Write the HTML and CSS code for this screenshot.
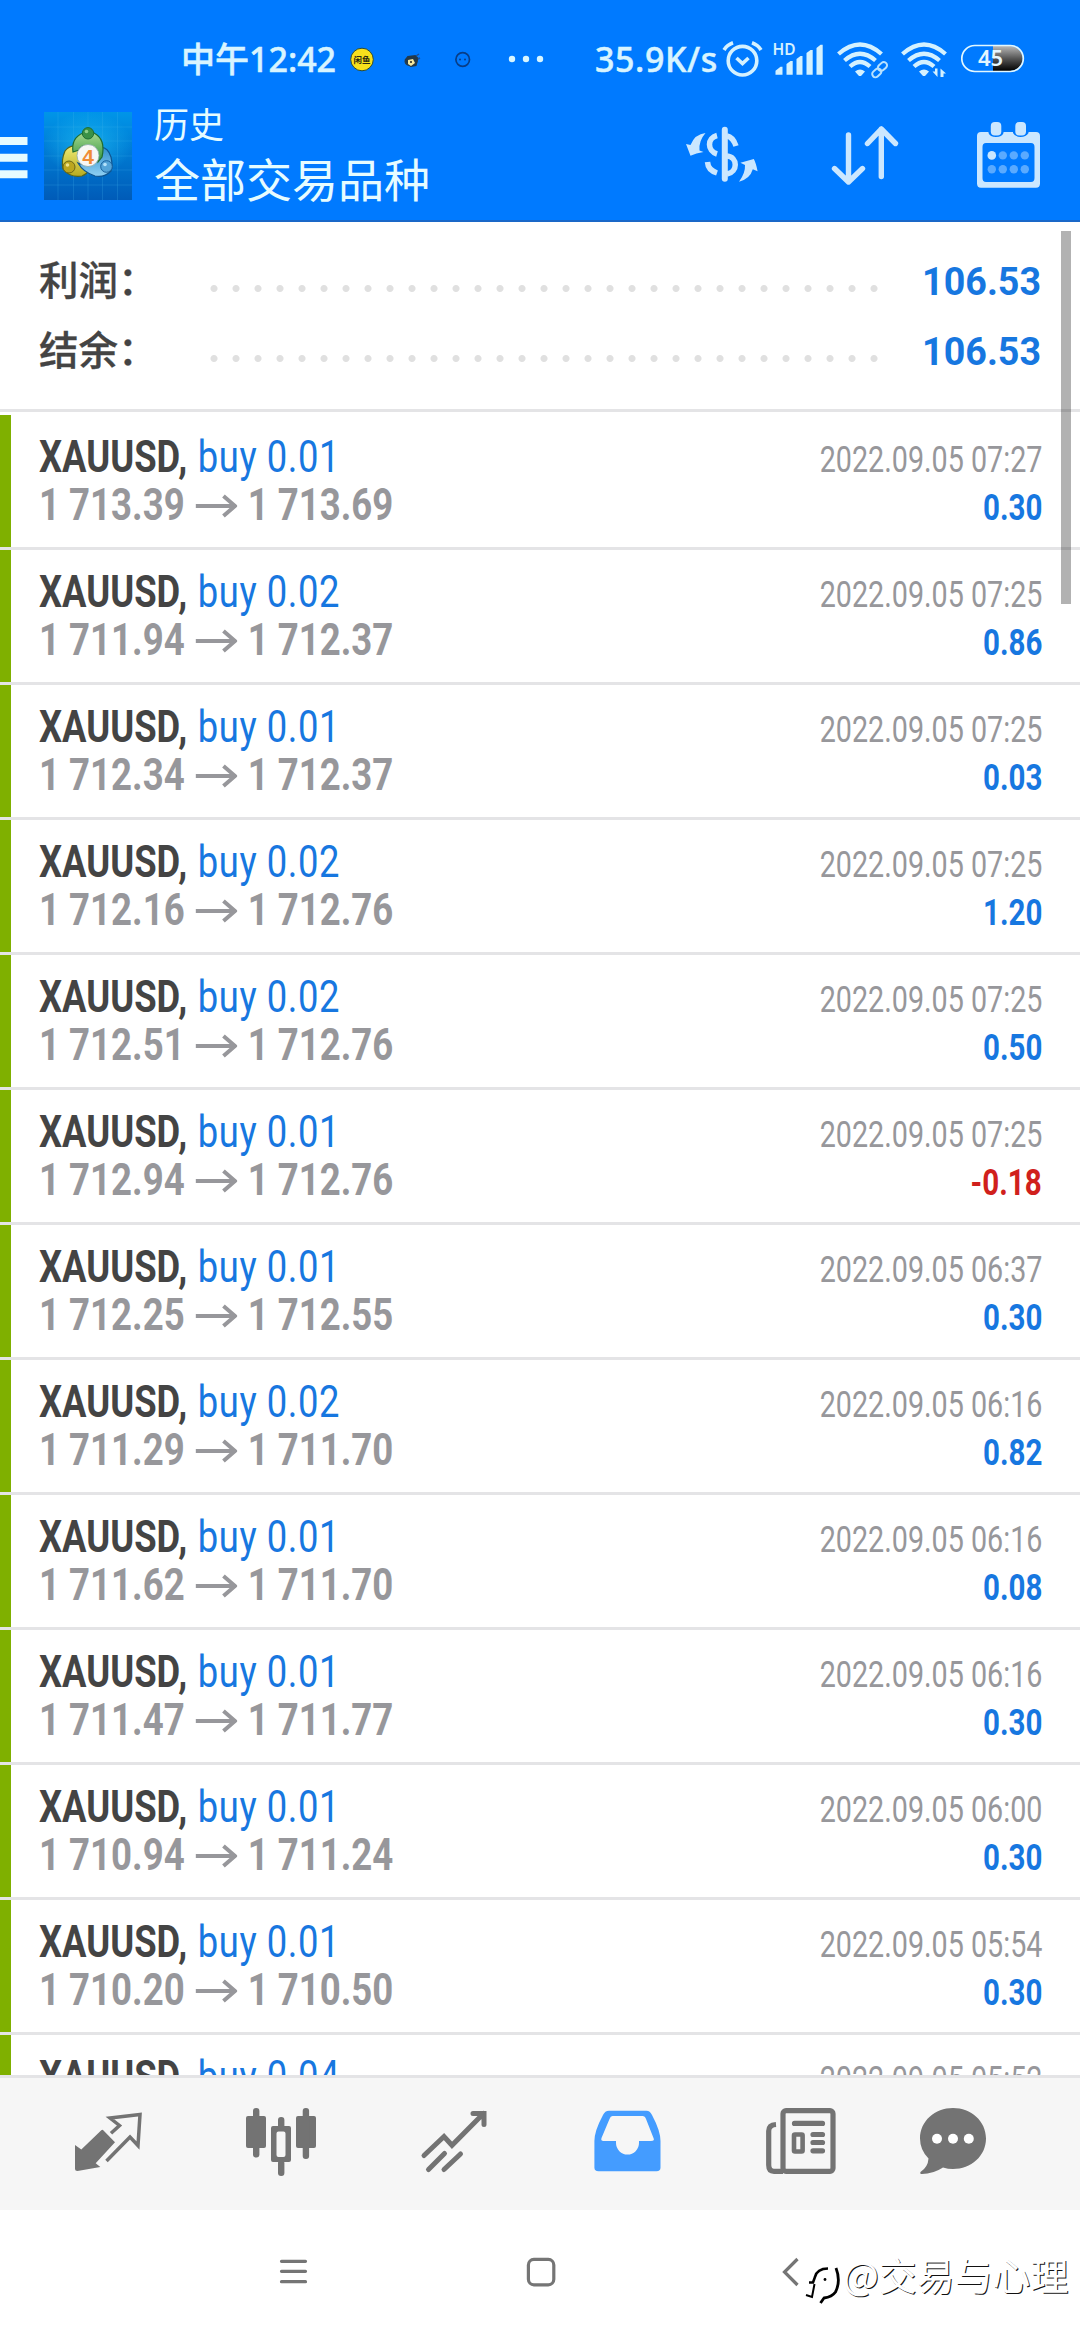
FILE: index.html
```html
<!DOCTYPE html>
<html lang="zh-CN">
<head>
<meta charset="utf-8">
<title>历史</title>
<link rel="stylesheet" href="styles.css">
</head>
<body>
<svg class="defs" width="0" height="0">
  <symbol id="arrow" viewBox="0 0 42 24" preserveAspectRatio="none"><path d="M0 12H39M28 2L39.500 12L28 22" fill="none" stroke="#97979b" stroke-width="4"/></symbol>
</svg>
<div class="screen">
<header class="top">
  <div class="status">
    <span class="clock">中午12:42</span>
    <svg class="notif" viewBox="340 0 215 95" width="215" height="95">
      <circle cx="362" cy="59.500" r="11.300" fill="#f8e01c" stroke="#2c4a33" stroke-width="1"/>
      <text x="362" y="62.500" text-anchor="middle" class="badge-text">闲鱼</text>
      <ellipse cx="411" cy="61.500" rx="6.500" ry="5" fill="#263f50"/>
      <path d="M404.500 60l3-4 8-1 3 3-2 8-6 1z" fill="#23394a"/>
      <path d="M408 60l5-1 2 4-4 3-3-2z" fill="#f3e8a0"/><circle cx="411" cy="62" r="1" fill="#222"/>
      <path d="M416 56l3-2M418 59l2-1" stroke="#1b4f98" stroke-width="1.500"/>
      <circle cx="462.700" cy="59.500" r="6.800" fill="none" stroke="#083d86" stroke-width="1.700"/>
      <circle cx="460" cy="59.500" r="1" fill="#083d86"/><circle cx="465" cy="59.500" r="1" fill="#083d86"/>
      <g fill="#d8f6ff"><circle cx="512" cy="59" r="3.200"/><circle cx="526" cy="59" r="3.200"/><circle cx="540" cy="59" r="3.200"/></g>
    </svg>
    <span class="speed">35.9K/s</span>
    <svg class="signals" viewBox="720 0 310 95" width="310" height="95">
      <defs><linearGradient id="bat" x1="0" y1="0" x2="0" y2="1"><stop offset="0" stop-color="#b8b8b8"/><stop offset=".5" stop-color="#555"/><stop offset="1" stop-color="#000"/></linearGradient></defs>
      <g fill="none" stroke="#d4f1ff" stroke-width="3.600">
        <circle cx="742.500" cy="60.700" r="14.300"/>
        <path d="M724 50Q727 45 733 42.800M761 50Q758 45 752 42.800"/>
        <path d="M736.500 58l6 5.500 6-5.500"/>
      </g>
      <text x="772.500" y="54.800" class="hd">HD</text>
      <g fill="#d4f1ff">
        <path d="M775.500 74.700v-4l5-4h2v8zM786.500 74.700V64l4-3h2.200v13.700zM796.500 74.700V59l4-3h2v18.700zM806.500 74.700V53l4-3h2.200v24.700zM816.500 74.700V48l4-3.300h2.200v30z"/>
        <path d="M855 71.500Q860 67.500 865 71.500L861.500 75.500Q860 76.500 858.500 75.500zM919 71.500Q924 67.500 929 71.500L925.500 75.500Q924 76.500 922.500 75.500z"/>
        <path d="M937.500 68.500V77L932.500 71.500H935V68.500zM940.500 77V68.500L946 73.500H943.500V77z"/>
      </g>
      <g fill="none" stroke="#d4f1ff" stroke-width="4.300">
        <path d="M838.500 54Q860 35 881.500 54M844.500 60.500Q860 47 875.500 60.500M850 66.500Q860 57.500 870 66.500"/>
        <path d="M902.500 54Q924 35 945.500 54M908.500 60.500Q924 47 939.500 60.500M914 66.500Q924 57.500 934 66.500"/>
      </g>
      <g fill="none" stroke="#b8e2ff" stroke-width="2">
        <rect x="877" y="63.500" width="6.500" height="10" rx="3.200" transform="rotate(48 880.250 68.500) translate(0 -3)"/>
        <rect x="875" y="66.500" width="6.500" height="10" rx="3.200" transform="rotate(48 878.250 71.500) translate(0 2)"/>
      </g>
      <path d="M993 46H1010a12.500 12.500 0 0 1 0 25H993z" fill="url(#bat)"/>
      <rect x="961.800" y="45.500" width="61.500" height="26" rx="13" fill="none" stroke="#e2f8ff" stroke-width="1.700"/>
      <text x="990.500" y="66.300" text-anchor="middle" class="battery">45</text>
    </svg>
  </div>
  <div class="bar">
    <svg viewBox="0 95 140 125" width="140" height="125">
      <defs>
        <linearGradient id="lg" x1="0" y1="0" x2="0" y2="1"><stop offset="0" stop-color="#0095e8"/><stop offset="1" stop-color="#005bb8"/></linearGradient>
        <radialGradient id="shine"><stop offset="0" stop-color="#22c4f5" stop-opacity=".65"/><stop offset="1" stop-color="#22c4f5" stop-opacity="0"/></radialGradient>
        <linearGradient id="green" x1="0" y1="0" x2="0" y2="1"><stop offset="0" stop-color="#a5d78c"/><stop offset="1" stop-color="#2f9340"/></linearGradient>
        <linearGradient id="yellow" x1="0" y1="0" x2="0" y2="1"><stop offset="0" stop-color="#eeea72"/><stop offset="1" stop-color="#b7ab20"/></linearGradient>
        <linearGradient id="sky" x1="0" y1="0" x2="0" y2="1"><stop offset="0" stop-color="#2f8fcc"/><stop offset="1" stop-color="#8fd0f3"/></linearGradient>
      </defs>
      <path d="M0 141H27.500M0 157.700H27.500M0 174.300H27.500" stroke="#e6fbff" stroke-width="8"/>
      <rect x="44" y="112" width="88" height="88" fill="url(#lg)"/>
      <rect x="44" y="112" width="88" height="65" fill="url(#shine)"/>
      <path d="M58 112v88M73.500 112v88M88 112v88M102.500 112v88M117.500 112v88M44 127h88M44 141h88M44 156h88M44 170h88M44 185h88" stroke="#45b8ed" stroke-opacity=".22" stroke-width="1"/>
      <path d="M80 148Q71 143 65 151Q61 160 63 169Q70 178 82 176Q92 172 90 160z" fill="url(#yellow)" stroke="#56651c" stroke-width="1.200"/>
      <path d="M98 148Q107 145 111 157Q113 166 111 171Q104 178 95 176Q83 172 78 163Q88 168 98 160z" fill="url(#sky)" stroke="#0f5590" stroke-width="1.200"/>
      <path d="M73 152Q71 138 83 133H94Q106 139 102 157L98 162Q97 150 88 147Q82 144 79 150z" fill="url(#green)" stroke="#1f6d30" stroke-width="1.200"/>
      <circle cx="88" cy="133.300" r="5.700" fill="#3a9146" stroke="#1f6d30"/>
      <circle cx="69" cy="167" r="6" fill="#bba61f" stroke="#6a6618"/>
      <circle cx="106.500" cy="166.500" r="5.800" fill="#54a4d8" stroke="#175f9c"/>
      <circle cx="86.500" cy="131.500" r="1.800" fill="#8fcf8a"/><circle cx="67.500" cy="165" r="1.800" fill="#f0e38a"/><circle cx="105" cy="164.500" r="1.800" fill="#b5e2fa"/>
      <circle cx="88" cy="155.500" r="11" fill="#f7f7f5" stroke="#8aa9a8" stroke-width=".8"/>
      <text x="88" y="163.500" text-anchor="middle" class="logo-four">4</text>
    </svg>
    <div class="titles"><div class="sub">历史</div><div class="main">全部交易品种</div></div>
    <svg viewBox="670 95 410 125" width="410" height="125">
      <g fill="#cbe7ff">
        <rect x="721.800" y="126.700" width="6" height="55" rx="3"/>
        <path d="M690.500 155.700L686 144L690.500 145Q695 134 705.500 133Q698.500 141 699.500 150.500L703.500 152Q696 153 690.500 155.700z"/>
        <path d="M753.800 159L740.400 162.700L745 165Q745.500 173 739 181.700Q750 179 752.800 169.300L757.600 171.300Q756 163 753.800 159z"/>
      </g>
      <g fill="none" stroke="#cbe7ff" stroke-width="5.500">
        <path d="M717 135.500C707 138 707 151 717 154M707.500 162Q708 170 717 173M727 136Q733 137 736 146M727 156C738 157 738 172 727 174"/>
      </g>
      <path d="M848.500 135V182M834.500 168.500L848.500 182L862.500 168.500M881.300 176.500V129M867.500 143.500L881.300 129L895.500 143.500" fill="none" stroke="#cbe7ff" stroke-width="5.400" stroke-linecap="round" stroke-linejoin="round"/>
      <path fill-rule="evenodd" fill="#cbe7ff" d="M981 132H988.500V133Q990 137 996 137Q1002 137 1003.500 133V132H1013V133Q1015 137 1020.500 137Q1026 137 1028.500 133V132H1036Q1040 132 1040 136V183.500Q1040 187.700 1036 187.700H981Q977 187.700 977 183.500V136Q977 132 981 132zM986 143Q982.500 143 982.500 147V178Q982.500 182 986 182H1031Q1034.500 182 1034.500 178V147Q1034.500 143 1031 143z"/>
      <rect x="990.800" y="122" width="10.500" height="13.500" rx="4" fill="#cbe7ff"/><rect x="1015.300" y="122" width="10.700" height="13.500" rx="4" fill="#cbe7ff"/>
      <circle cx="991.800" cy="155.400" r="4.300" fill="#cbe7ff"/>
      <g fill="#5aaaff"><circle cx="1002.800" cy="155.400" r="4.200"/><circle cx="1013.800" cy="155.400" r="4.200"/><circle cx="1024.800" cy="155.400" r="4.200"/><circle cx="991.800" cy="169.300" r="4.200"/><circle cx="1002.800" cy="169.300" r="4.200"/><circle cx="1013.800" cy="169.300" r="4.200"/><circle cx="1024.800" cy="169.300" r="4.200"/></g>
    </svg>
  </div>
</header>
<main class="content">
  <section class="summary">
    <div class="sum-row"><span class="label">利润：</span><span class="leader"></span><b>106.53</b></div>
    <div class="sum-row"><span class="label">结余：</span><span class="leader"></span><b>106.53</b></div>
  </section>
  <section class="deals">
    <article class="deal"><div class="left"><p class="name"><b>XAUUSD,</b> <span>buy 0.01</span></p><p class="price"><span>1 713.39</span><svg><use href="#arrow"/></svg><span>1 713.69</span></p></div><div class="right"><time>2022.09.05 07:27</time><b>0.30</b></div></article>
    <article class="deal"><div class="left"><p class="name"><b>XAUUSD,</b> <span>buy 0.02</span></p><p class="price"><span>1 711.94</span><svg><use href="#arrow"/></svg><span>1 712.37</span></p></div><div class="right"><time>2022.09.05 07:25</time><b>0.86</b></div></article>
    <article class="deal"><div class="left"><p class="name"><b>XAUUSD,</b> <span>buy 0.01</span></p><p class="price"><span>1 712.34</span><svg><use href="#arrow"/></svg><span>1 712.37</span></p></div><div class="right"><time>2022.09.05 07:25</time><b>0.03</b></div></article>
    <article class="deal"><div class="left"><p class="name"><b>XAUUSD,</b> <span>buy 0.02</span></p><p class="price"><span>1 712.16</span><svg><use href="#arrow"/></svg><span>1 712.76</span></p></div><div class="right"><time>2022.09.05 07:25</time><b>1.20</b></div></article>
    <article class="deal"><div class="left"><p class="name"><b>XAUUSD,</b> <span>buy 0.02</span></p><p class="price"><span>1 712.51</span><svg><use href="#arrow"/></svg><span>1 712.76</span></p></div><div class="right"><time>2022.09.05 07:25</time><b>0.50</b></div></article>
    <article class="deal"><div class="left"><p class="name"><b>XAUUSD,</b> <span>buy 0.01</span></p><p class="price"><span>1 712.94</span><svg><use href="#arrow"/></svg><span>1 712.76</span></p></div><div class="right"><time>2022.09.05 07:25</time><b class="loss">-0.18</b></div></article>
    <article class="deal"><div class="left"><p class="name"><b>XAUUSD,</b> <span>buy 0.01</span></p><p class="price"><span>1 712.25</span><svg><use href="#arrow"/></svg><span>1 712.55</span></p></div><div class="right"><time>2022.09.05 06:37</time><b>0.30</b></div></article>
    <article class="deal"><div class="left"><p class="name"><b>XAUUSD,</b> <span>buy 0.02</span></p><p class="price"><span>1 711.29</span><svg><use href="#arrow"/></svg><span>1 711.70</span></p></div><div class="right"><time>2022.09.05 06:16</time><b>0.82</b></div></article>
    <article class="deal"><div class="left"><p class="name"><b>XAUUSD,</b> <span>buy 0.01</span></p><p class="price"><span>1 711.62</span><svg><use href="#arrow"/></svg><span>1 711.70</span></p></div><div class="right"><time>2022.09.05 06:16</time><b>0.08</b></div></article>
    <article class="deal"><div class="left"><p class="name"><b>XAUUSD,</b> <span>buy 0.01</span></p><p class="price"><span>1 711.47</span><svg><use href="#arrow"/></svg><span>1 711.77</span></p></div><div class="right"><time>2022.09.05 06:16</time><b>0.30</b></div></article>
    <article class="deal"><div class="left"><p class="name"><b>XAUUSD,</b> <span>buy 0.01</span></p><p class="price"><span>1 710.94</span><svg><use href="#arrow"/></svg><span>1 711.24</span></p></div><div class="right"><time>2022.09.05 06:00</time><b>0.30</b></div></article>
    <article class="deal"><div class="left"><p class="name"><b>XAUUSD,</b> <span>buy 0.01</span></p><p class="price"><span>1 710.20</span><svg><use href="#arrow"/></svg><span>1 710.50</span></p></div><div class="right"><time>2022.09.05 05:54</time><b>0.30</b></div></article>
    <article class="deal"><div class="left"><p class="name"><b>XAUUSD,</b> <span>buy 0.04</span></p></div><div class="right"><time>2022.09.05 05:52</time></div></article>
  </section>
  <div class="scrollbar"></div>
</main>
<nav class="tabs">
  <svg viewBox="60 2078 120 132"><path d="M103 2130L115 2142.300L95.700 2163.300L100.300 2167L77.500 2171Q75 2171 75 2168.500V2145L81.300 2149.500L100 2131.500Q102 2129 103 2130z" fill="#737373"/><path d="M111 2133.300L119.500 2125.500L110 2118L140 2114.500L138 2145.500L130 2137L106.500 2161" fill="none" stroke="#737373" stroke-width="3.500"/></svg>
  <svg viewBox="221 2078 120 132"><g fill="#737373"><rect x="246" y="2116" width="20" height="32" rx="2"/><rect x="296" y="2116" width="20" height="32" rx="2"/><rect x="253" y="2108" width="6.400" height="49.500" rx="3"/><rect x="302.700" y="2108" width="6.400" height="51" rx="3"/><rect x="278" y="2117" width="6.400" height="14" rx="3"/><rect x="278" y="2160" width="6.400" height="16" rx="3"/><path fill-rule="evenodd" d="M273 2126h16q2 0 2 2v32q0 2-2 2h-16q-2 0-2-2v-32q0-2 2-2zm5.500 5.500q-2 0-2 2v21.500q0 2 2 2h5q2 0 2-2v-21.500q0-2-2-2z"/></g></svg>
  <svg viewBox="394 2078 120 132"><g fill="none" stroke="#737373" stroke-width="5" stroke-linecap="round"><path d="M424 2155.500L444 2136.500L452 2145.300L483.500 2113.500M473 2113.500H484V2124.500M428.500 2169.500L444.500 2153.500M444 2169.500L460.500 2154"/></g></svg>
  <svg viewBox="567 2078 120 132"><path fill="#449cff" fill-rule="evenodd" d="M609 2110.700H646.500Q650 2110.700 652 2115Q660.500 2131 660.500 2141V2167.500Q660.500 2171.300 656.500 2171.300H598.500Q594.400 2171.300 594.400 2167.500V2141Q594.400 2131 603 2115Q605 2110.700 609 2110.700zM612.500 2116Q610.500 2116 609.500 2119L601.500 2138Q600.500 2141 603.500 2141H616V2143A11.400 11.400 0 0 0 639 2143V2141H651Q655 2141 653.500 2138L646 2119Q645 2116 642.500 2116z"/></svg>
  <svg viewBox="740 2078 120 132"><g fill="none" stroke="#737373" stroke-width="5.200" stroke-linecap="round"><rect x="783" y="2110.700" width="50" height="60.600" rx="3"/><path stroke-linecap="butt" d="M776 2124.500Q768.700 2125 768.700 2131V2165Q768.700 2171.300 774 2171.300H783"/><path d="M794.500 2123.400H822.500M813 2134.500H822.500M813 2142.500H822.500M813 2150.800H822.500"/><rect x="794" y="2134.500" width="8.600" height="17" rx="1" stroke-width="4.600"/></g></svg>
  <svg viewBox="893 2078 120 132"><path fill="#737373" d="M953 2108C971 2108 986 2121 986 2138.500S971 2169 953 2169Q948 2169 943 2167.500Q933 2174 922 2174Q919.500 2174 920.500 2172Q928 2167 928.500 2158.500Q920 2150 920 2138.500C920 2121 935 2108 953 2108z"/><g fill="#fff"><circle cx="937" cy="2138.700" r="5"/><circle cx="953" cy="2138.700" r="5"/><circle cx="968.800" cy="2138.700" r="5"/></g></svg>
</nav>
<footer class="sysnav">
  <svg viewBox="0 2210 1080 130" width="1080" height="130">
    <g fill="none" stroke="#757575" stroke-width="3.200" stroke-linecap="round"><path d="M281.500 2261.300H305.500M281.500 2271.300H305.500M281.500 2281.700H305.500"/><rect x="528.400" y="2259.400" width="25.400" height="25.400" rx="5.500"/><path stroke-linecap="butt" d="M797.500 2259L784.500 2272L797.500 2285"/></g>
    <g fill="none" stroke="#000"><path d="M809 2282.500H813L815 2277Q817 2268.500 828 2268.500" stroke-width="2.600"/><path d="M814.500 2284L812 2297L806 2295" stroke-width="2"/><path d="M836 2268Q841 2281 835.500 2292Q832 2297 824 2298L820.500 2303" stroke-width="2.800"/></g>
    <circle cx="825" cy="2279.500" r="1.400"/>
  </svg>
  <span class="watermark">@交易与心理</span>
</footer>
</div>
</body>
</html>
```
FILE: styles.css
```css
* { box-sizing: border-box; }
body { margin: 0; background: #fff; font-family: Roboto, "Noto Sans CJK SC", sans-serif; }
p { margin: 0; }
svg { display: block; flex: none; }
.defs { position: absolute; }
.screen { width: 1080px; height: 2340px; display: flex; flex-direction: column; overflow: hidden; }
.top { height: 222px; flex: none; background: #007aff; border-bottom: 2px solid #1a68c8; }
.status { display: flex; height: 95px; padding-left: 181px; color: #d8f4ff; font: 500 34px/34px "Noto Sans", "Noto Sans CJK SC", sans-serif; white-space: nowrap; -webkit-text-stroke: .5px #d8f4ff; }
.status svg { -webkit-text-stroke: 0; }
.clock { width: 159px; padding-top: 42px; }
.speed { width: 125px; margin-left: 40px; padding-top: 42px; letter-spacing: .6px; }
.badge-text { font: 700 8.500px "Noto Sans CJK SC", sans-serif; fill: #2a2a12; }
.hd { font: 600 15.500px "Noto Sans", sans-serif; fill: #d4f1ff; }
.battery { font: 600 22px "Noto Sans", sans-serif; fill: #e4f6ff; }
.bar { display: flex; height: 125px; }
.logo-four { font: 700 21px "Liberation Sans", sans-serif; fill: #f08c35; }
.titles { width: 530px; padding: 7px 0 0 14px; color: #e6fcff; font-family: "Noto Sans CJK SC", sans-serif; white-space: nowrap; }
.sub { font-size: 35px; line-height: 42px; }
.main { font-size: 46px; line-height: 60px; margin-top: 3px; }
.content { height: 1856px; flex: none; position: relative; overflow: hidden; border-bottom: 3px solid #e4e4e6; }
.summary { height: 190px; padding: 24px 39px 0 39px; border-bottom: 3px solid #e4e4e6; }
.sum-row { display: flex; height: 70px; align-items: center; color: #444; }
.label { width: 164px; margin-top: -6px; font: 500 39.500px/70px "Noto Sans CJK SC", sans-serif; -webkit-text-stroke: .3px #444; }
.leader { width: 682px; height: 7px; margin-top: 15px; background: radial-gradient(circle at 11px 3.500px, #e0e0e0 3px, transparent 4px) 0 0 / 22px 7px; }
.sum-row b { flex: 1; margin-top: 2px; text-align: right; font-size: 39.500px; line-height: 70px; color: #1777e0; transform: scaleX(.953); transform-origin: right; }
.deals { padding-top: 3px; }
.deal { display: flex; justify-content: space-between; height: 135px; padding: 19px 38px 0 39px; background: linear-gradient(#7fb000, #7fb000) 0 0 / 11px 132px no-repeat; border-bottom: 3px solid #e4e4e6; white-space: nowrap; }
.left { width: 420px; font-size: 43.500px; line-height: 48px; color: #97979b; }
.name { transform: scaleX(.836); transform-origin: left; }
.name b { color: #444; margin-right: 2px; }
.name span { color: #1777e0; letter-spacing: .7px; }
.price { display: flex; align-items: center; font-weight: 700; width: 480px; transform: scaleX(.841); transform-origin: left; }
.price svg { width: 50px; height: 24px; margin: 0 12px 0 13px; }
.right { display: flex; flex-direction: column; align-items: flex-end; font-size: 36px; line-height: 48px; padding-top: 2px; }
.right time { color: #97979b; transform: scaleX(.797); transform-origin: right; }
.right b { color: #1777e0; transform: scaleX(.82); transform-origin: right; }
.right .loss { color: #d0201c; }
.scrollbar { position: absolute; left: 1061px; top: 9px; width: 10px; height: 373px; background: rgba(0,0,0,.3); }
.tabs { height: 132px; flex: none; display: grid; grid-template-columns: 161px 173px 173px 173px 153px 120px; padding-left: 60px; background: #f6f6f6; }
.tabs svg { width: 120px; height: 132px; }
.sysnav { height: 130px; flex: none; position: relative; }
.watermark { position: absolute; left: 843px; top: 36px; font: 400 37.900px/56px "Noto Sans CJK SC", sans-serif; color: #fff; text-shadow: 1px 1px 0 #111; white-space: nowrap; }
```
